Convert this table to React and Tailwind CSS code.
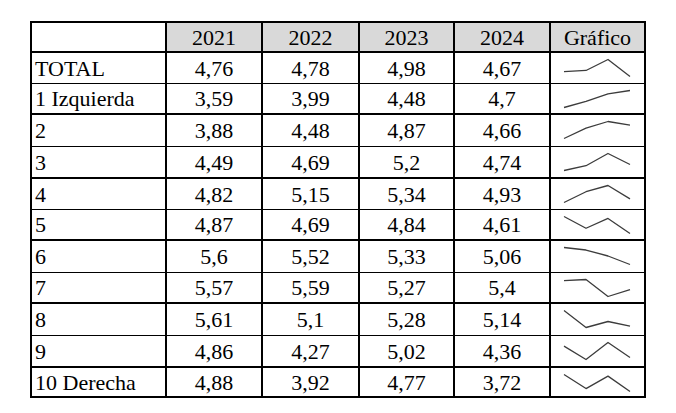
const YEARS = ['2021', '2022', '2023', '2024'];

// row heights include the bottom rule; thick and thin rules alternate as in the scan
const ROWS = [
  { label: 'TOTAL', values: [4.76, 4.78, 4.98, 4.67], cls: 'h-[31px] border-b' },
  { label: '1 Izquierda', values: [3.59, 3.99, 4.48, 4.7], cls: 'h-[31px] border-b-2' },
  { label: '2', values: [3.88, 4.48, 4.87, 4.66], cls: 'h-[32px] border-b' },
  { label: '3', values: [4.49, 4.69, 5.2, 4.74], cls: 'h-[32px] border-b-2' },
  { label: '4', values: [4.82, 5.15, 5.34, 4.93], cls: 'h-[31px] border-b' },
  { label: '5', values: [4.87, 4.69, 4.84, 4.61], cls: 'h-[31px] border-b-2' },
  { label: '6', values: [5.6, 5.52, 5.33, 5.06], cls: 'h-[32px] border-b' },
  { label: '7', values: [5.57, 5.59, 5.27, 5.4], cls: 'h-[31px] border-b-2' },
  { label: '8', values: [5.61, 5.1, 5.28, 5.14], cls: 'h-[32px] border-b' },
  { label: '9', values: [4.86, 4.27, 5.02, 4.36], cls: 'h-[32px] border-b-2' },
  { label: '10 Derecha', values: [4.88, 3.92, 4.77, 3.72], cls: 'h-[30px] border-b-2' },
];

const COLS = ['w-[96px]', 'w-[97px]', 'w-[95px]', 'w-[96px]'];

const fmt = (v) => String(v).replace('.', ',');

const Sparkline = ({ values }) => {
  const max = Math.max(...values);
  const min = Math.min(...values);
  const pts = values
    .map((v, i) => [13 + i * 22, (6.5 + ((max - v) / (max - min)) * 17).toFixed(2)].join(' '))
    .join(' ');
  return (
    <svg width="93" height="30" className="block">
      <polyline points={pts} fill="none" stroke="#3c3c3c" strokeWidth="1.3" strokeLinejoin="round" />
    </svg>
  );
};

const Cell = ({ className, children }) => (
  <div className={`flex items-center border-r-2 border-black font-['Times_New_Roman',serif] ${className}`}>
    <span className="font-['Times_New_Roman',serif]">{children}</span>
  </div>
);

export default function App() {
  return (
    <div className="w-[676px] h-[413px] bg-white pt-[21px] pl-[30px] text-[22px] text-black font-['Times_New_Roman',serif]">
      <div className="w-[616px] border-t-2 border-l-2 border-black">
        <div className="flex h-[30px] border-b-2 border-black">
          <div className="w-[135px] border-r-2 border-black" />
          {YEARS.map((y, i) => (
            <Cell key={y} className={`${COLS[i]} justify-center bg-[#d9d9d9]`}>
              {y}
            </Cell>
          ))}
          <Cell className="w-[95px] justify-center bg-[#d9d9d9]">Gráfico</Cell>
        </div>

        {ROWS.map((row) => (
          <div key={row.label} className={`flex border-black ${row.cls}`}>
            <Cell className="w-[135px] pl-[3px] whitespace-nowrap">{row.label}</Cell>
            {row.values.map((v, i) => (
              <Cell key={i} className={`${COLS[i]} justify-center`}>
                {fmt(v)}
              </Cell>
            ))}
            <div className="w-[95px] flex items-start border-r-2 border-black">
              <Sparkline values={row.values} />
            </div>
          </div>
        ))}
      </div>
    </div>
  );
}
